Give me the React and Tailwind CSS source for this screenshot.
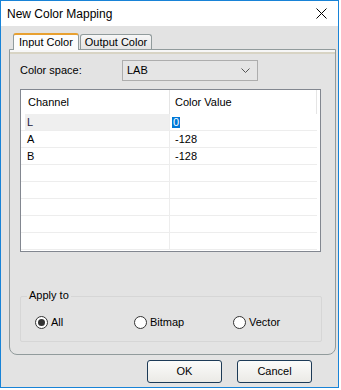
import React from 'react';

const font = { fontFamily: '"Liberation Sans", Arial, sans-serif' };

function Radio({ checked, label }) {
  return (
    <label className="flex items-center gap-[3px]">
      <span className="w-[13px] h-[13px] rounded-full border border-[#333] bg-white flex items-center justify-center">
        {checked && <span className="w-[7px] h-[7px] rounded-full bg-[#333]" />}
      </span>
      <span>{label}</span>
    </label>
  );
}

const rows = [
  { ch: 'L', val: '0', sel: true },
  { ch: 'A', val: '-128' },
  { ch: 'B', val: '-128' },
  { ch: '', val: '' },
  { ch: '', val: '' },
  { ch: '', val: '' },
  { ch: '', val: '' },
  { ch: '', val: '' },
];

export default function App() {
  return (
    <div className="w-[341px] h-[390px] bg-white text-[11px] text-black leading-none" style={font}>
      <div className="w-[339px] h-[388px] border border-[#1883d7] bg-[#e3e3e3] flex flex-col">
        {/* title bar */}
        <div className="h-[25px] bg-white flex items-center justify-between pl-[6px] pr-[11px] shrink-0">
          <span className="text-[12px]">New Color Mapping</span>
          <svg width="11" height="11" viewBox="0 0 11 11" className="text-black">
            <path d="M0.5 0.5 L10.5 10.5 M10.5 0.5 L0.5 10.5" stroke="currentColor" strokeWidth="1" />
          </svg>
        </div>

        {/* tabs */}
        <div className="flex items-end pl-[12px] h-[22px] mt-[1px] shrink-0">
          <div className="relative z-10 h-[17px] -mb-[1px] px-[5px] flex items-center bg-[#fcfcfc] border-x border-[#919b9c] border-t-2 border-t-[#e8a030] rounded-t-[3px] pb-[1px]">
            Input Color
          </div>
          <div className="h-[15px] ml-[1px] px-[4px] flex items-center bg-gradient-to-b from-[#f7f7f7] to-[#e4e4e4] border border-b-0 border-[#919b9c] rounded-t-[3px]">
            Output Color
          </div>
        </div>

        {/* panel */}
        <div className="mx-[8px] w-[327px] h-[306px] border border-[#919b9c] rounded-b-[8px] flex flex-col shrink-0">
          <div className="h-[2px] bg-[#f7f7f7]" />
          <div className="h-[2px] bg-[#d8d4c4]" />
          <div className="flex items-center mt-[6px] pl-[10px]">
            <span className="w-[102px]">Color space:</span>
            <div className="w-[136px] h-[21px] border border-[#adadad] bg-[#e5e5e5] flex items-center justify-between pl-[4px] pr-[7px]">
              <span>LAB</span>
              <svg width="9" height="5" viewBox="0 0 9 5">
                <path d="M0.5 0.5 L4.5 4.5 L8.5 0.5" fill="none" stroke="#555" strokeWidth="1" />
              </svg>
            </div>
          </div>

          {/* table */}
          <div className="ml-[10px] mt-[8px] w-[301px] h-[163px] border border-[#828790] bg-white flex flex-col overflow-hidden">
            <div className="flex h-[24px] shrink-0">
              <div className="w-[149px] pl-[7px] flex items-center border-r border-[#e5e5e5]">Channel</div>
              <div className="w-[147px] pl-[5px] flex items-center border-r border-[#e5e5e5]">Color Value</div>
            </div>
            {rows.map((r, i) => (
              <div key={i} className="flex h-[17px] shrink-0 border-b border-[#ededed] w-[296px]">
                <div className={`flex items-center border-r border-[#ededed] ${r.sel ? 'ml-[4px] pl-[2px] bg-[#efefef] text-[#1a1a40] w-[145px]' : 'w-[149px] pl-[6px]'}`}>
                  {r.ch}
                </div>
                <div className="flex-1 flex items-center pl-[2px]">
                  {r.sel ? (
                    <span className="bg-[#0078d7] text-white px-[1px] h-[11px] flex items-center">{r.val}</span>
                  ) : (
                    <span className="pl-[3px]">{r.val}</span>
                  )}
                </div>
              </div>
            ))}
          </div>

          {/* apply to group */}
          <div className="relative ml-[10px] mt-[44px] w-[302px] h-[46px] border border-[#d6d6d6] rounded-[2px]">
            <span className="absolute -top-[7px] left-[6px] px-[2px] bg-[#e3e3e3]">Apply to</span>
            <div className="flex items-center h-full pt-[6px] pl-[14px]">
              <div className="w-[99px]"><Radio checked label="All" /></div>
              <div className="w-[99px]"><Radio label="Bitmap" /></div>
              <div><Radio label="Vector" /></div>
            </div>
          </div>
        </div>

        {/* buttons */}
        <div className="flex justify-end gap-[15px] pr-[26px] mt-[5px]">
          <button className="w-[75px] h-[23px] rounded-[3px] border border-[#1c3a57] bg-gradient-to-b from-[#fbfbfa] to-[#ebeae6]">OK</button>
          <button className="w-[75px] h-[23px] rounded-[3px] border border-[#1c3a57] bg-gradient-to-b from-[#fbfbfa] to-[#ebeae6]">Cancel</button>
        </div>
      </div>
    </div>
  );
}
